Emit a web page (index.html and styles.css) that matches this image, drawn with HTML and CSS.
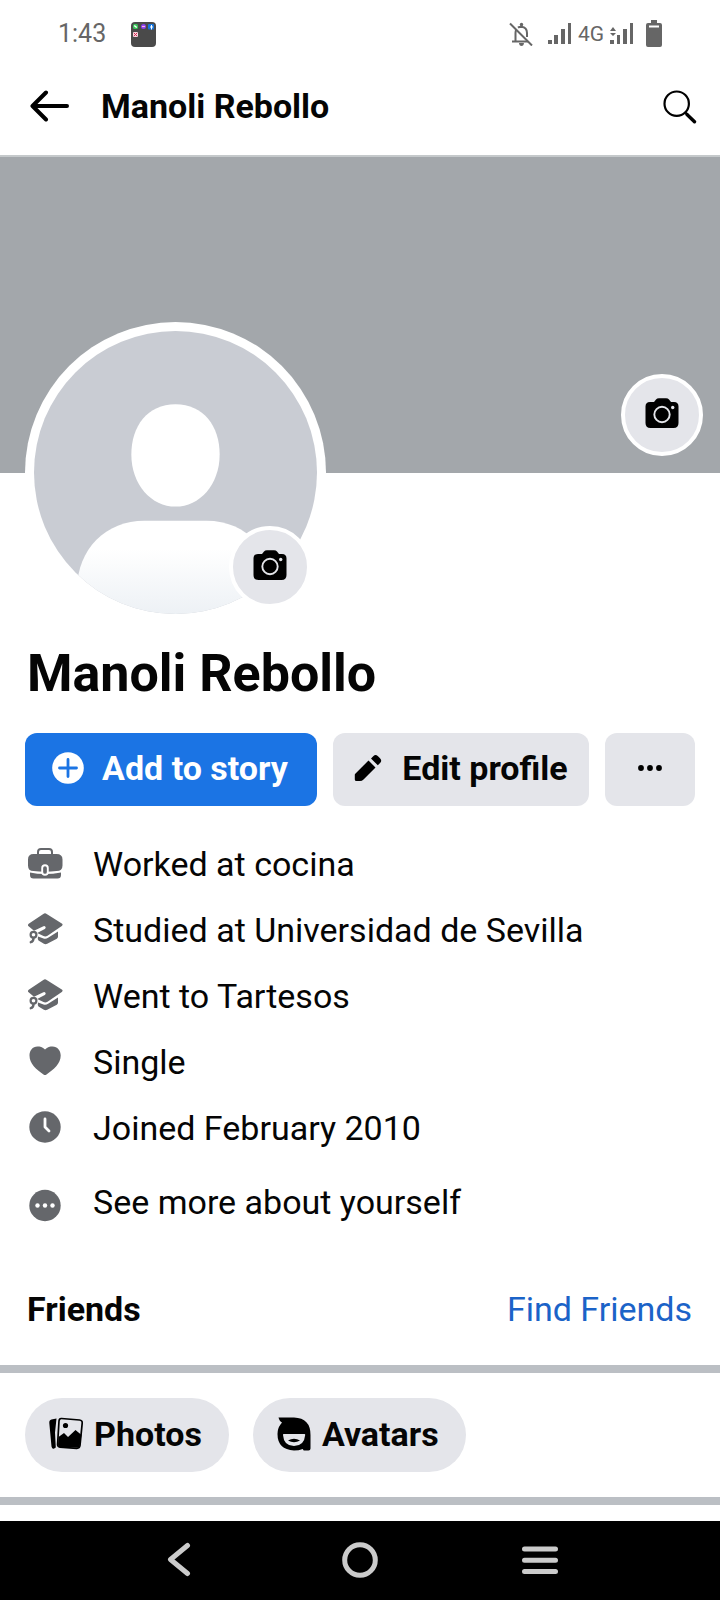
FILE: index.html
```html
<!DOCTYPE html>
<html lang="en">
<head>
<meta charset="utf-8">
<meta name="viewport" content="width=device-width, initial-scale=1">
<title>Manoli Rebollo</title>
<link rel="stylesheet" href="styles.css">
</head>
<body>
<svg class="sprite" aria-hidden="true">
  <symbol id="camera" viewBox="0 0 34 30">
    <path fill="#000" d="M5 4h4l2-2.400Q12 .3 14 .3h7q2 0 3 1.300L26 4h3q4.500 0 4.500 4.500V25q0 5-5 5h-23q-5 0-5-5V8.500Q.5 4 5 4z"/>
    <circle cx="17" cy="16.500" r="7.700" fill="none" stroke="#e4e5ea" stroke-width="1.900"/>
    <circle cx="27.700" cy="9.500" r="1.700" fill="#e4e5ea"/>
  </symbol>
  <symbol id="hat" viewBox="0 0 36 36">
    <path fill="#65676b" d="M16.300 2.900q1.700-1.100 3.400 0L34.800 12.600q1.600 1.200 0 2.400L20.500 24.800q-2 1.200-4 .3l-6.300-3 7.600-4.200q1.400-1 .6-2.200-.9-1.100-2.500-.3L7 19.700 1.600 15.300q-1.400-1.300.1-2.600z"/>
    <path fill="#65676b" d="M11 25.500l5.500 2q2.300.8 4.600-.7L31 20.500v5.300q0 1.200-1.200 2l-9.600 5q-1.700.8-3.300 0L11.500 29.500q-1.200-1-.5-4z"/>
    <circle cx="6.500" cy="23.800" r="2.900" fill="none" stroke="#65676b" stroke-width="2.200"/>
    <path fill="none" stroke="#65676b" stroke-width="2.400" stroke-linecap="round" d="M6.500 27q0 3.500-2.700 4.200"/>
  </symbol>
</svg>
<div class="screen">
  <div class="status">
    <time class="clock">1:43</time>
    <svg class="folder" viewBox="0 0 25 25">
      <rect width="25" height="25" rx="4" fill="#4a4a4a"/>
      <rect x="2" y="2" width="5" height="5" rx="1.500" fill="#38c558"/>
      <path d="M3.300 3.400l2.400 2.200" stroke="#fff" stroke-width="1.400"/>
      <circle cx="12.500" cy="4.500" r="2.500" fill="#8b3ff0"/><path d="M11 4.500h3" stroke="#ffb2dd" stroke-width="1.200"/>
      <rect x="17" y="2" width="6" height="5.500" rx="1" fill="#1675dc"/><path d="M20.500 7.500V3M19 5h3" stroke="#fff" stroke-width="1"/>
      <rect x="2" y="10" width="5" height="5" rx="1" fill="#f7d5dd"/><path d="M3 11l3 3M6 11l-3 3" stroke="#d62b55" stroke-width="1"/>
    </svg>
    <div class="signals">
      <svg class="bell" viewBox="0 0 24 24" fill="none" stroke="#666" stroke-width="2">
        <path d="M3 19.500h16M6.500 19V11q0-2 .9-3.500M9 5.600Q10 4.800 12.500 4.800 18 5.500 18 11v4M12.500 5V2"/>
        <path d="M1 1.500l22 22"/><path fill="#666" stroke="none" d="M10 21h5q-.3 3-2.500 3T10 21z"/><circle cx="12.500" cy="2.500" r="1.700" fill="#666" stroke="none"/>
      </svg>
      <svg class="bars" viewBox="0 0 24 22" fill="#666"><path d="M0 17h4v4H0zM6 12h4v9H6zM13 6h4v15h-4zM20 0h3v21h-3z"/></svg>
      <span class="net">4G</span>
      <svg class="bars" viewBox="0 0 24 22" fill="#666"><path d="M0 17h4v4H0zM7 12h3v9H7zM13 6h4v15h-4zM20 0h3v21h-3zM0 8l3-4 3 4zM0 10h6l-3 3z"/></svg>
      <svg class="battery" viewBox="0 0 16 27"><path fill="#666" d="M5 0h6v3h3q2 0 2 2v20q0 2-2 2H2q-2 0-2-2V5q0-2 2-2h3z"/><path fill="#fff" d="M3 5.500h10v2H3z"/></svg>
    </div>
  </div>
  <header class="topbar">
    <button class="plain" aria-label="Back"><svg class="back" viewBox="0 0 40 32" fill="none" stroke="#000" stroke-width="4" stroke-linecap="round" stroke-linejoin="round"><path d="M37 16H3M16 2.500L2.500 16 16 29.500"/></svg></button>
    <span class="topname">Manoli Rebollo</span>
    <button class="plain" aria-label="Search"><svg class="search" viewBox="0 0 34 34" fill="none" stroke="#000"><circle cx="13.700" cy="13.700" r="12.200" stroke-width="2.200"/><path d="M22 22l2.500 2.500" stroke-width="2.400"/><path d="M24 24.500l7.500 7.300" stroke-width="3.400" stroke-linecap="round"/></svg></button>
  </header>
  <main class="main">
    <section class="cover"><button class="badge cover-badge" aria-label="Change cover photo"><svg class="camera"><use href="#camera"/></svg></button></section>
    <section class="profile">
      <div class="avatar">
        <svg class="portrait" viewBox="0 0 282 282" role="img" aria-label="Profile picture">
          <defs>
            <clipPath id="round"><circle cx="141" cy="141" r="141"/></clipPath>
            <linearGradient id="shirt" x1="0" y1="0" x2="0" y2="1"><stop offset=".3" stop-color="#fff"/><stop offset="1" stop-color="#edf1f5"/></linearGradient>
          </defs>
          <g clip-path="url(#round)">
            <path fill="#c9ccd3" d="M0 0h282v282H0z"/>
            <path fill="#fff" d="M141 73c28 0 44 22 44 50 0 30-20 52-44 52s-44-22-44-52c0-28 16-50 44-50z"/>
            <path fill="url(#shirt)" d="M110 189h62c38 0 66 28 66 68v25H43v-25c0-40 29-68 67-68z"/>
          </g>
        </svg>
        <button class="badge avatar-badge" aria-label="Change profile picture"><svg class="camera"><use href="#camera"/></svg></button>
      </div>
      <h1 class="name">Manoli Rebollo</h1>
      <div class="actions">
        <button class="btn story"><svg class="plus" viewBox="0 0 32 32"><circle cx="16" cy="16" r="15.800" fill="#fff"/><path d="M16 7.500v17M7.500 16h17" stroke="#1b74e4" stroke-width="2.800" stroke-linecap="round"/></svg>Add to story</button>
        <button class="btn edit"><svg class="pencil" viewBox="0 0 28 28"><path fill="#000" d="M1 20L14.500 6.500l7 7L9.500 25.500Q8 27 6 27H2.500Q.8 27 .8 25.500V21q0-.6.200-1zM17 4.500l2.500-2.500q2-2 4.500.3l2 2q2.300 2.400.3 4.500l-2.500 2.500z"/></svg>Edit profile</button>
        <button class="btn" aria-label="More options"><svg class="dots" viewBox="0 0 26 8"><circle cx="4" cy="4" r="2.900"/><circle cx="13" cy="4" r="2.900"/><circle cx="22" cy="4" r="2.900"/></svg></button>
      </div>
      <ul class="facts">
        <li class="fact"><svg class="icon" viewBox="0 0 36 36"><path fill="none" stroke="#65676b" stroke-width="2" d="M11 10V7q0-3 3-3h8q3 0 3 3v3"/><path fill="#65676b" d="M6.500 9h23q6 0 6 5.500v6q0 5.500-6 5.500-5.500.8-11.500.8T6.500 26Q1 26 1 20.500v-6Q1 9 6.500 9zM3 27.500q7 1.500 15 1.500t16-1.500v2.500q0 3.500-3.500 3.500h-24Q3 33.500 3 30z"/><rect x="15.200" y="20.200" width="5.600" height="9.600" rx="2.800" fill="#65676b" stroke="#fff" stroke-width="1.900"/></svg>Worked at cocina</li>
        <li class="fact"><svg class="icon"><use href="#hat"/></svg>Studied at Universidad de Sevilla</li>
        <li class="fact"><svg class="icon"><use href="#hat"/></svg>Went to Tartesos</li>
        <li class="fact"><svg class="icon" viewBox="0 0 36 36"><path fill="#65676b" d="M18 6.500C20.500 4 23 3.500 25.500 3.500c5 0 8.200 4 8.200 9 0 8-7 14-14.200 19q-1.500 1-3 0C9.300 26.500 2.500 20.500 2.500 12.500c0-5 3-9 8-9 2.500 0 5 .5 7.500 3z"/></svg>Single</li>
        <li class="fact"><svg class="icon" viewBox="0 0 36 36"><circle cx="18" cy="18" r="15.700" fill="#65676b"/><path fill="none" stroke="#fff" stroke-width="2.800" stroke-linecap="round" stroke-linejoin="round" d="M18 10v8l4 4"/></svg>Joined February 2010</li>
      </ul>
      <button class="plain fact seemore"><svg class="icon" viewBox="0 0 36 36"><circle cx="18" cy="22.500" r="15.700" fill="#65676b"/><g fill="#fff"><circle cx="10.500" cy="22.500" r="2.200"/><circle cx="18" cy="22.500" r="2.200"/><circle cx="25.500" cy="22.500" r="2.200"/></g></svg>See more about yourself</button>
      <div class="friends"><h2 class="heading">Friends</h2><a class="link" href="#">Find Friends</a></div>
    </section>
    <nav class="pills">
      <button class="pill"><svg class="pillicon" viewBox="0 0 34 34"><path d="M2.500 2.500l5-1-1.500 14 .8 15-2 1.200Q3 32 2.500 29.500L.3 6Q0 3 2.500 2.500z"/><path fill="none" stroke="#000" stroke-width="1.700" d="M12.500 1.500L30.500 3q3 .3 2.700 3.200L31 28.500q-.4 3-3.500 2.800L11 30.200q-2.700-.4-2.400-3.200L10 4q.3-2.700 2.500-2.500z"/><circle cx="16.500" cy="8.500" r="2.600"/><path d="M9.500 20l5.500-4 4 4 7.500-7 6 5-1.800 11q-.4 2-2.700 1.800L11 30q-2-.3-2-2.500z"/></svg>Photos</button>
      <button class="pill"><svg class="pillicon" viewBox="0 0 34 34"><path d="M1.500.5H17Q33.500 1 33.500 18v13.500q0 2-2 2h-4.800l-1-1.500Q22 33.500 17 33.500.5 32.500.5 17q0-5.500 3-9.500L5 5.500Q2.500 4.500 1.500.5z"/><path fill="#e4e5ea" d="M6.500 17h21q.8 0 .7 1-1 11-11.200 11T6 18q0-1 .5-1z"/><path d="M11 23.500q6-3.500 12 0-6 3.500-12 0z"/></svg>Avatars</button>
    </nav>
  </main>
  <nav class="system">
    <button class="plain" aria-label="System back"><svg class="key" viewBox="0 0 36 36"><path d="M25.500 3.500L8.500 17.500l17 14"/></svg></button>
    <button class="plain" aria-label="Home"><svg class="key" viewBox="0 0 36 36"><circle cx="18" cy="18" r="15.300"/></svg></button>
    <button class="plain" aria-label="Recent apps"><svg class="key" viewBox="0 0 36 36"><path d="M2.500 7h31M2.500 18.300h31M2.500 29.500h31"/></svg></button>
  </nav>
</div>
</body>
</html>
```
FILE: styles.css
```css
* { box-sizing: border-box; }
body {
  margin: 0;
  background: #fff;
  color: #050505;
  font-family: Roboto, "Liberation Sans", sans-serif;
  font-size: 34px;
  line-height: 40px;
}
button {
  font: inherit;
  color: inherit;
  border: 0;
  cursor: pointer;
}
svg { display: block; flex: none; }
h1, h2, ul { margin: 0; padding: 0; }
.sprite { position: absolute; width: 0; height: 0; }
.plain { padding: 0; background: none; }
.screen {
  display: flex;
  flex-direction: column;
  min-height: 100vh;
}

.status {
  display: flex;
  align-items: center;
  height: 68px;
  padding: 0 58px;
  color: #666;
}
.clock { font-size: 25px; }
.folder { width: 25px; height: 25px; margin-left: 25px; }
.signals {
  display: flex;
  align-items: center;
  margin-left: auto;
}
.bell { width: 24px; height: 24px; margin-right: 15px; }
.bars { width: 24px; height: 22px; }
.net { margin: 0 6px; font-size: 21px; line-height: 24px; }
.battery { width: 16px; height: 27px; margin: 0 0 2px 12px; }

.topbar {
  display: flex;
  align-items: center;
  height: 89px;
  padding: 0 23px 12px 30px;
  border-bottom: 2px solid #c5c9cb;
}
.back { width: 40px; height: 32px; }
.topname { flex: 1; margin-left: 31px; font-weight: 700; }
.search { width: 34px; height: 34px; margin-top: 2px; }

.main { flex: 1; }
.cover {
  position: relative;
  height: 316px;
  background: #a3a7ab;
}
.badge {
  position: absolute;
  display: flex;
  align-items: center;
  justify-content: center;
  width: 82px;
  height: 82px;
  padding: 0 1px 4px 0;
  border: 4px solid #fff;
  border-radius: 50%;
  background: #e4e5ea;
}
.camera { width: 34px; height: 30px; }
.cover-badge { right: 17px; bottom: 17px; }
.avatar-badge { right: 15px; bottom: 15px; }

.profile { padding: 0 25px; }
.avatar {
  position: relative;
  width: 301px;
  height: 301px;
  margin-top: -151px;
  padding: 9px;
  border-radius: 50%;
  background: #fff;
}
.portrait { width: 283px; height: 283px; }
.name {
  margin-top: 21px;
  padding-left: 2px;
  font-size: 52px;
  line-height: 60px;
  font-weight: 700;
}
.actions {
  display: grid;
  grid-template-columns: 292fr 256fr 90fr;
  gap: 16px;
  margin-top: 29px;
}
.btn {
  display: flex;
  align-items: center;
  justify-content: center;
  height: 73px;
  padding: 0 0 4px;
  border-radius: 12px;
  background: #e4e5ea;
  font-weight: 700;
  white-space: nowrap;
}
.story { gap: 18px; padding-right: 2px; background: #1b74e4; color: #fff; }
.edit { gap: 20px; }
.plus { width: 32px; height: 32px; }
.pencil { width: 28px; height: 28px; }
.dots { width: 26px; height: 8px; }

.facts { margin-top: 25px; list-style: none; }
.fact {
  display: flex;
  align-items: center;
  gap: 30px;
  min-height: 66px;
  padding-left: 2px;
  text-align: left;
}
.icon { width: 36px; height: 36px; margin-bottom: 2px; overflow: visible; }
.seemore { width: 100%; margin-top: 8px; }
.friends {
  display: flex;
  justify-content: space-between;
  padding: 54px 3px 36px 2px;
}
.heading { font: inherit; font-weight: 700; }
.link { color: #1b63c8; text-decoration: none; }

.pills {
  display: flex;
  gap: 24px;
  padding: 25px;
  border: solid #bbbfc4;
  border-width: 8px 0;
}
.pill {
  display: flex;
  align-items: center;
  gap: 11px;
  height: 74px;
  padding: 0 27px 2px 24px;
  border-radius: 37px;
  background: #e4e5ea;
  font-weight: 700;
}
.pillicon { width: 34px; height: 34px; }

.system {
  display: grid;
  grid-template-columns: repeat(3, 1fr);
  height: 79px;
  padding: 0 12.5% 1px;
  background: #000;
}
.system button { display: grid; place-items: center; }
.key {
  width: 36px;
  height: 36px;
  fill: none;
  stroke: #cbcbcb;
  stroke-width: 5px;
  stroke-linecap: round;
  stroke-linejoin: round;
}
```
